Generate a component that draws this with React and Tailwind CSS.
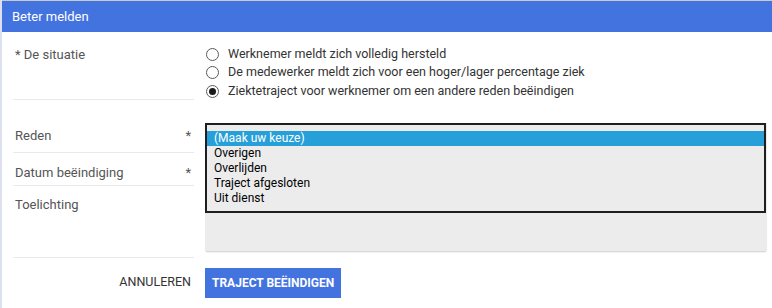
import React from 'react';

const situaties = [
  { label: 'Werknemer meldt zich volledig hersteld', checked: false },
  { label: 'De medewerker meldt zich voor een hoger/lager percentage ziek', checked: false },
  { label: 'Ziektetraject voor werknemer om een andere reden beëindigen', checked: true },
];

const redenen = ['(Maak uw keuze)', 'Overigen', 'Overlijden', 'Traject afgesloten', 'Uit dienst'];

function Radio({ checked }) {
  return (
    <span className="w-[13px] h-[13px] rounded-full border border-[#5a5a5a] bg-white flex items-center justify-center shrink-0">
      {checked && <span className="w-[7px] h-[7px] rounded-full bg-[#1a1a1a]" />}
    </span>
  );
}

export default function App() {
  return (
    <div className="w-[772px] h-[308px] bg-white border-l-2 border-[#dde1ef] font-['Roboto',sans-serif] overflow-hidden">
      {/* header */}
      <div className="h-8 bg-[#4373df] border-t border-[#c9cbd1] flex items-center px-[10px]">
        <span className="text-white text-[13px]">Beter melden</span>
      </div>

      {/* De situatie */}
      <div className="flex">
        <div className="w-[181px] ml-[11px] h-[68px] border-b border-[#e8e8ee] pt-[10px] pl-[2px]">
          <span className="text-[13px] leading-[18px] text-[#555]">* De situatie</span>
        </div>
        <div className="ml-[12px] pt-[13px] flex flex-col">
          {situaties.map((s) => (
            <label key={s.label} className="flex items-center gap-[9px] h-[18.5px] text-[12.5px] text-[#333]">
              <Radio checked={s.checked} />
              {s.label}
            </label>
          ))}
        </div>
      </div>

      {/* Reden / Datum / Toelichting */}
      <div className="flex">
        <div className="w-[181px] ml-[11px] flex flex-col text-[13px] text-[#555]">
          <div className="h-[52px] border-b border-[#e8e8ee] flex items-end justify-between pb-[6px] pl-[2px] pr-[3px]">
            <span>Reden</span>
            <span>*</span>
          </div>
          <div className="h-[33px] border-b border-[#e8e8ee] flex items-center justify-between pt-[8px] pl-[2px] pr-[3px]">
            <span>Datum beëindiging</span>
            <span>*</span>
          </div>
          <div className="h-[72px] border-b border-[#e8e8ee] pt-[9px] pl-[2px]">
            <span>Toelichting</span>
          </div>
        </div>
        <div className="flex-1 ml-[11px] mr-[5px] pt-[22px]">
          <div className="relative h-[129px] bg-[#ececec] rounded-b-[3px] border-b border-[#d9d9d9] shadow-[0_1px_1px_rgba(0,0,0,0.06)]">
            <div className="absolute left-0 top-0 right-[1px] h-[90px] border-2 border-[#1f1f1f] bg-[#ececec] pt-[6px] text-[12px] text-black">
              {redenen.map((r, i) => (
                <div
                  key={r}
                  className={
                    i === 0
                      ? 'h-[15px] leading-[15px] px-[7px] bg-[#27a0da] text-white'
                      : 'h-[15px] leading-[15px] px-[7px]'
                  }
                >
                  {r}
                </div>
              ))}
            </div>
          </div>
        </div>
      </div>

      {/* knoppen */}
      <div className="flex pt-[10px]">
        <div className="w-[181px] ml-[11px] h-[30px] flex items-center justify-end pr-[3px]">
          <span className="text-[12.5px] text-[#333] uppercase">Annuleren</span>
        </div>
        <button className="ml-[11px] h-[30px] px-[7px] bg-[#4373df] text-white text-[12px] font-bold uppercase">
          Traject beëindigen
        </button>
      </div>
    </div>
  );
}
